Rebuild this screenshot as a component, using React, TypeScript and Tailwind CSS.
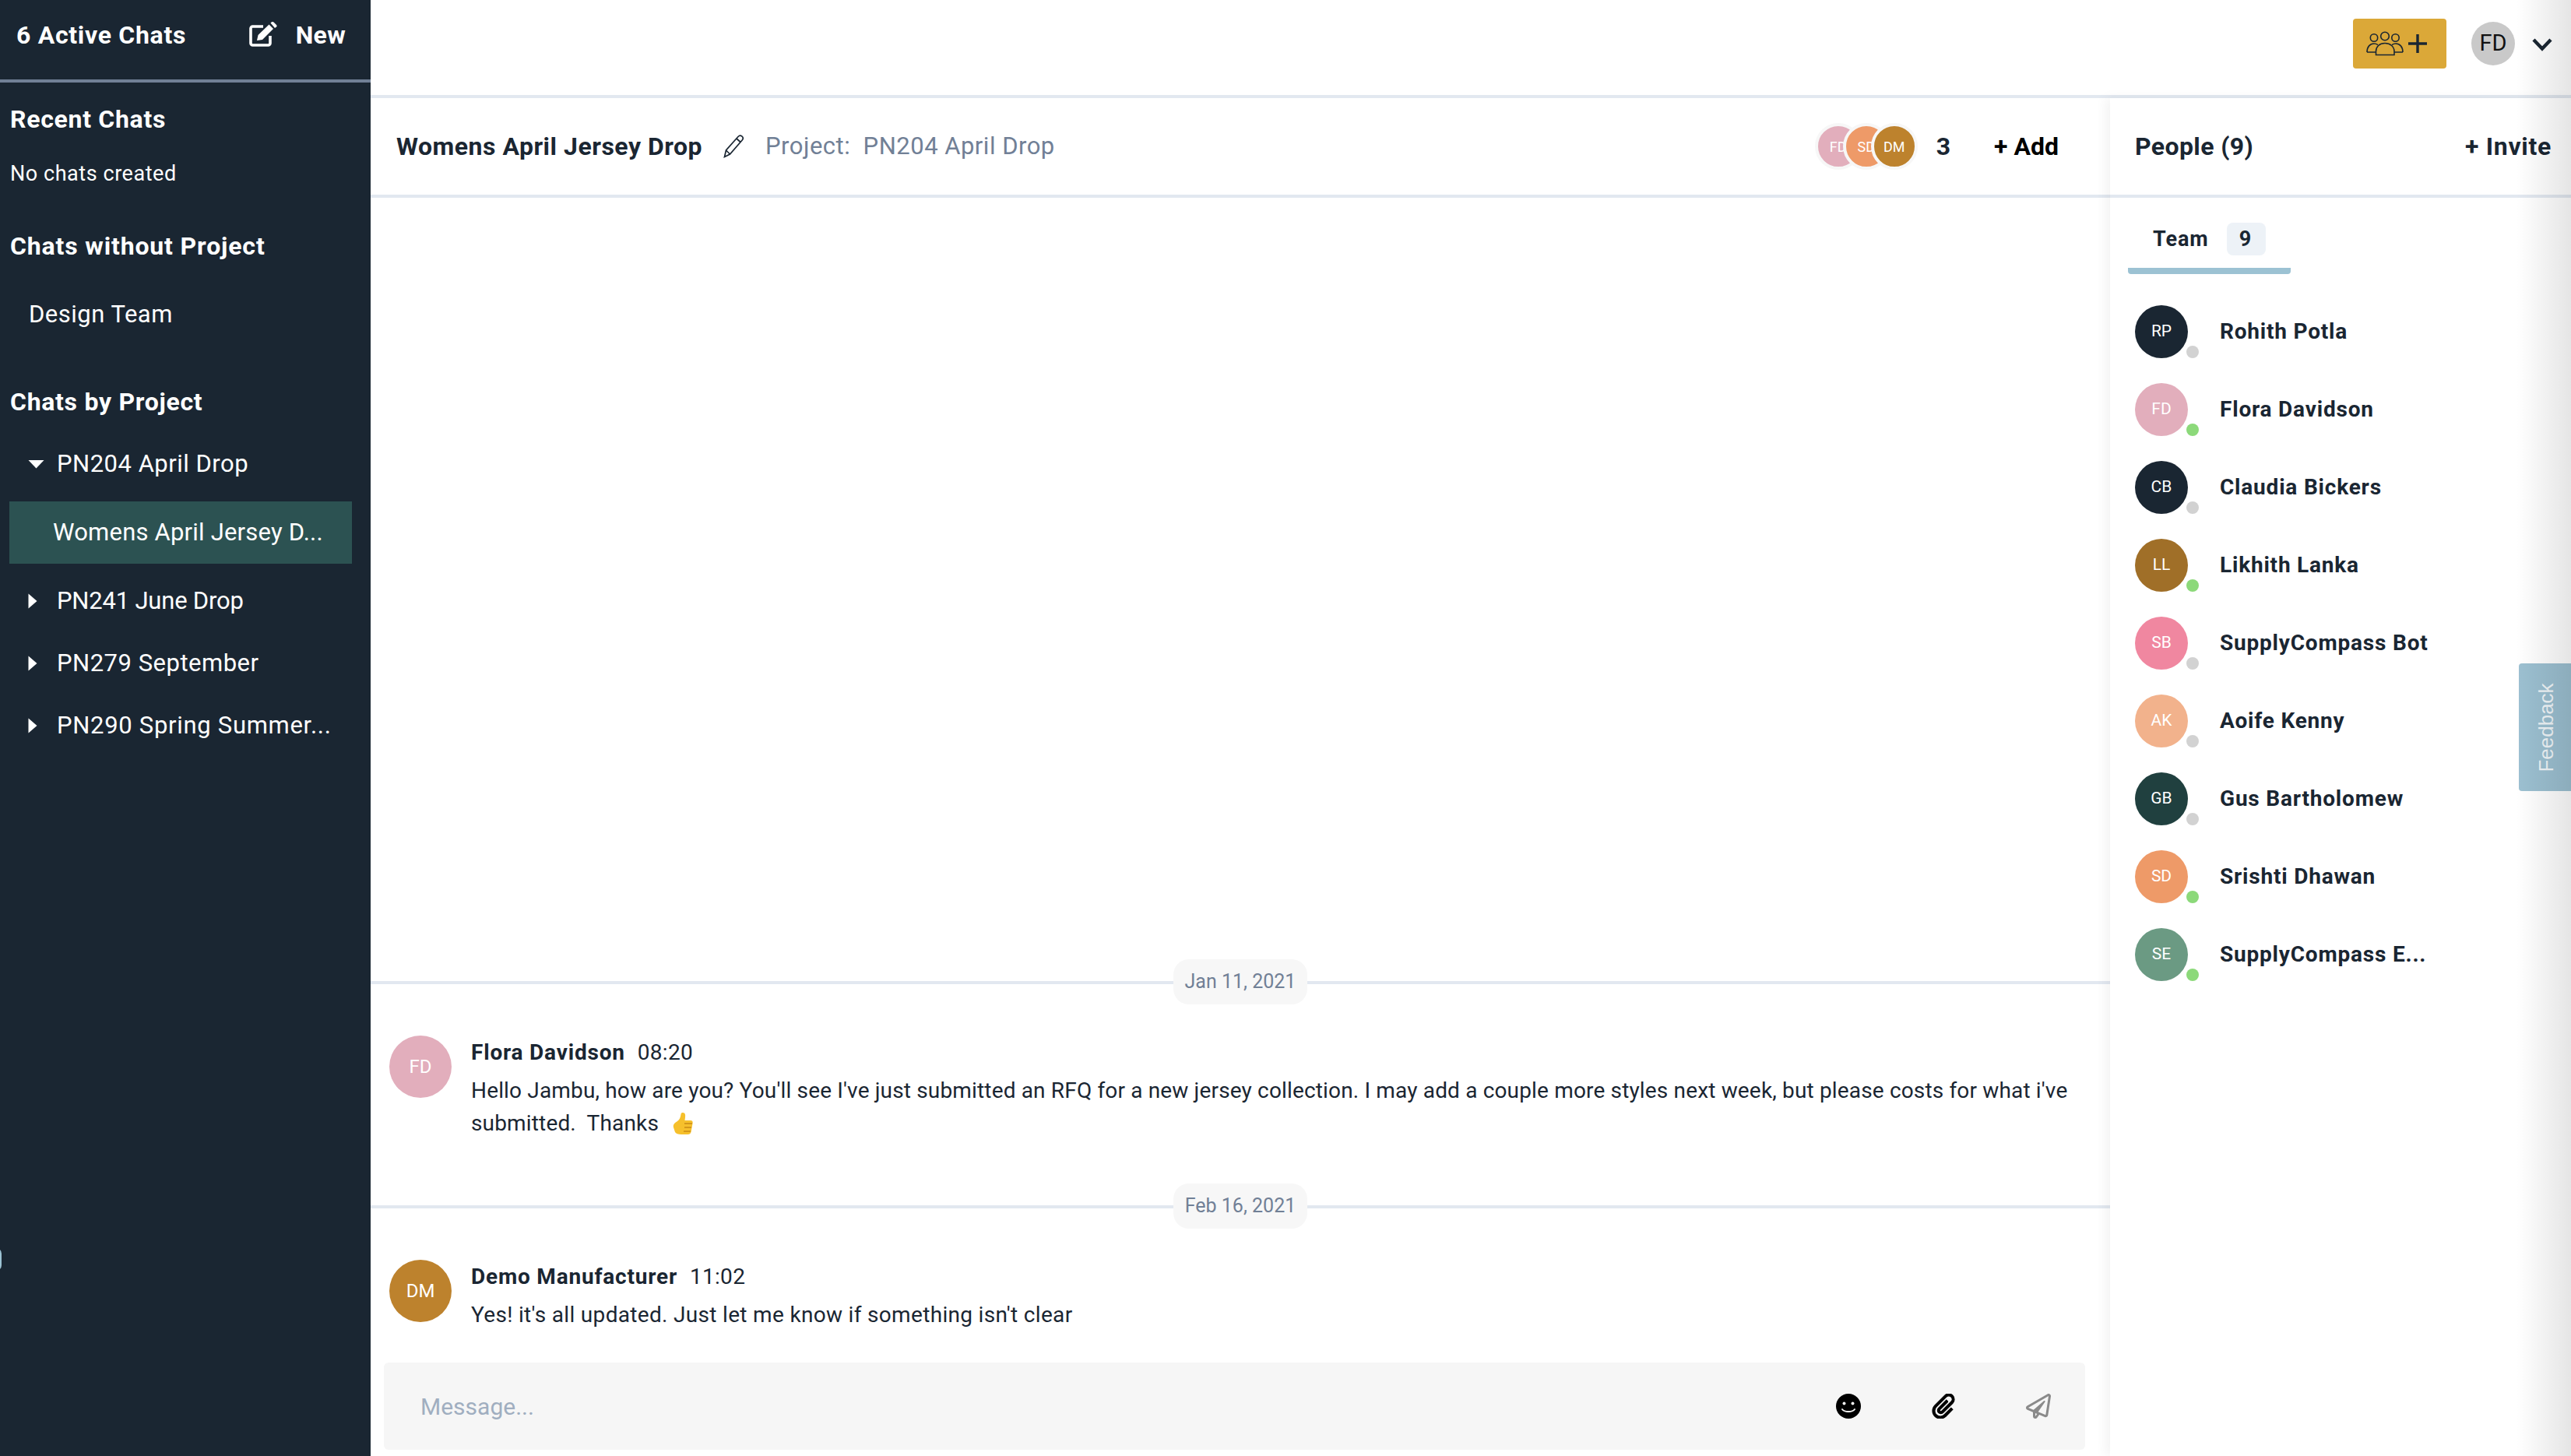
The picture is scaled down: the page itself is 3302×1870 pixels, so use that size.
import React from "react";
import { FaRegPaperPlane } from "react-icons/fa";
import { ImAttachment } from "react-icons/im";

const people = [
  { i: "RP", n: "Rohith Potla", c: "bg-[#1a2632]", on: false },
  { i: "FD", n: "Flora Davidson", c: "bg-[#e2aebc]", on: true },
  { i: "CB", n: "Claudia Bickers", c: "bg-[#1a2632]", on: false },
  { i: "LL", n: "Likhith Lanka", c: "bg-[#a06f28]", on: true },
  { i: "SB", n: "SupplyCompass Bot", c: "bg-[#f087a0]", on: false },
  { i: "AK", n: "Aoife Kenny", c: "bg-[#f2b28c]", on: false },
  { i: "GB", n: "Gus Bartholomew", c: "bg-[#20403f]", on: false },
  { i: "SD", n: "Srishti Dhawan", c: "bg-[#ee9a68]", on: true },
  { i: "SE", n: "SupplyCompass E...", c: "bg-[#6b9a83]", on: true },
];

function CaretRight() {
  return <span className="block w-[37px]"><svg width="12" height="20" viewBox="0 0 12 20"><path d="M0.5 0.5 L11.5 10 L0.5 19.5 Z" fill="#fff" /></svg></span>;
}
function CaretDown() {
  return <span className="block w-[37px]"><svg width="21" height="12" viewBox="0 0 21 12"><path d="M0.5 1 L20.5 1 L10.5 11.5 Z" fill="#fff" /></svg></span>;
}
function ProjectRow({ label, open, track }: { label: string; open?: boolean; track: string }) {
  return (
    <div className={`flex h-[80px] items-center pl-[36px] text-[31px] text-white ${track}`}>
      {open ? <CaretDown /> : <CaretRight />}
      <span>{label}</span>
    </div>
  );
}
function DateDivider({ label }: { label: string }) {
  return (
    <div className="relative flex h-[58px] items-center justify-center">
      <div className="absolute left-0 right-0 top-[28px] h-[4px] bg-[#e2e8f0]" />
      <span className="relative rounded-[20px] bg-[#f7f7f7] px-[15px] text-[25px] leading-[58px] text-[#718096]">{label}</span>
    </div>
  );
}
function ThumbsUp() {
  return (
    <svg width="30" height="30" viewBox="0 0 30 30" className="ml-[16px] inline-block align-[-6px]">
      <path d="M15 1 C18 1 18.5 4 18 7 L17.5 11 L25 11 C27 11 28 12.5 27.6 14.5 L25.5 26 C25 28 23.5 29 21.5 29 L13 29 C9 29 6 28 5 26 L3 20 C2 16 5 14 8 12 C11 10 12 7 12.5 3 C12.8 1.6 13.6 1 15 1 Z" fill="#f6c02c" />
      <path d="M17 15 L27 15 M17 20 L26 20 M16 25 L25 25" stroke="#c98a14" strokeWidth="1.4" />
    </svg>
  );
}
function GroupIcon() {
  return (
    <svg width="48" height="32" viewBox="0 0 48 32" fill="none" stroke="#1a2632" strokeWidth="1.6">
      <circle cx="10" cy="8.5" r="4.7" />
      <circle cx="24" cy="6.5" r="5.3" />
      <circle cx="37.5" cy="8.5" r="4.7" />
      <path d="M1 27 L12 27 M1 27 C1 20 5 16 10 16 C12 16 13.5 16.6 15 17.6" />
      <path d="M47 27 L36 27 M47 27 C47 20 43 16 38 16 C36 16 34.5 16.6 33 17.6" />
      <path d="M12.5 30.5 L36 30.5 L36 26 C36 20 31 15.5 24 15.5 C17 15.5 12.5 20 12.5 26 Z" />
    </svg>
  );
}
function SmileIcon() {
  return (
    <svg width="32" height="32" viewBox="0 0 32 32">
      <circle cx="16" cy="16" r="16" fill="#000" />
      <circle cx="10.5" cy="12.5" r="2" fill="#f6f6f6" />
      <circle cx="21.5" cy="12.5" r="2" fill="#f6f6f6" />
      <path d="M8 20 C11 24 21 24 24 20" stroke="#f6f6f6" strokeWidth="2" fill="none" strokeLinecap="round" />
    </svg>
  );
}
function EditIcon() {
  return (
    <svg width="36" height="32" viewBox="0 0 36 32" className="ml-auto mt-[2px]">
      <path d="M27 18 V27.5 a2.5 2.5 0 0 1 -2.5 2.5 H4.5 a2.5 2.5 0 0 1 -2.5 -2.5 V8.5 a2.5 2.5 0 0 1 2.5 -2.5 H18" fill="none" stroke="#fff" strokeWidth="3.6" />
      <path d="M10 24 L11.5 17 L25.5 3.5 L31 9 L17 23 Z" fill="#fff" />
      <path d="M27.5 1.5 L29 0.3 C30 -0.3 30.8 0 31.5 0.6 L35 4 C35.8 5 35.8 5.8 35 6.6 L33 8 Z" fill="#fff" />
    </svg>
  );
}

export default function App() {
  return (
    <div className="relative flex h-[1870px] w-[3302px] overflow-hidden bg-white font-['Roboto',sans-serif] text-[#1a2632]">
      <aside className="flex w-[476px] shrink-0 flex-col bg-[#1a2632] text-white">
        <div className="flex h-[106px] shrink-0 items-start border-b-[4px] border-[#718096] pl-[21px] pr-[32px] pt-[26px]">
          <span className="text-[32px] font-bold leading-[38px] tracking-[0.7px]">6 Active Chats</span>
          <EditIcon />
          <span className="ml-[24px] text-[32px] font-bold leading-[38px] tracking-[0.3px]">New</span>
        </div>
        <div className="pl-[13px] pt-[28px] text-[32px] font-bold leading-[38px] tracking-[0.7px]">Recent Chats</div>
        <div className="pl-[13px] pt-[35px] text-[27px] leading-[32px] tracking-[0.55px]">No chats created</div>
        <div className="pl-[13px] pt-[58px] text-[32px] font-bold leading-[38px] tracking-[0.85px]">Chats without Project</div>
        <div className="pl-[37px] pt-[50px] text-[31px] leading-[38px] tracking-[0.5px]">Design Team</div>
        <div className="pl-[13px] pt-[74px] text-[32px] font-bold leading-[38px] tracking-[0.7px]">Chats by Project</div>
        <div className="pt-[21px]">
          <ProjectRow label="PN204 April Drop" open track="tracking-[0.5px]" />
          <div className="ml-[12px] mr-[24px] mt-[8px] mb-[8px] flex h-[80px] items-center bg-[#2c5252] pl-[56px] text-[31px] tracking-[0.2px] text-white">Womens April Jersey D...</div>
          <ProjectRow label="PN241 June Drop" track="-tracking-[0.2px]" />
          <ProjectRow label="PN279 September" track="tracking-[0.5px]" />
          <ProjectRow label="PN290 Spring Summer..." track="tracking-[0.7px]" />
        </div>
      </aside>

      <div className="flex min-w-0 flex-1 flex-col">
        <header className="flex h-[126px] shrink-0 items-start border-b-[4px] border-[#e2e8f0] pl-[16px] pr-[24px]">
          <div className="ml-auto mt-[24px] flex h-[64px] w-[120px] items-center gap-[5px] rounded-[4px] bg-[#dba838] pl-[17px]">
            <GroupIcon />
            <svg width="26" height="26" viewBox="0 0 26 26" stroke="#1a2632" strokeWidth="3.4"><path d="M13 1 V25 M1 13 H25" /></svg>
          </div>
          <div className="ml-[32px] mt-[28px] flex h-[56px] w-[56px] items-center justify-center rounded-full bg-[#c9c9c9] text-[29px] text-[#111]">FD</div>
          <svg className="ml-[22px] mt-[49px]" width="26" height="17" viewBox="0 0 26 17" fill="none" stroke="#1a2632" strokeWidth="4.4"><path d="M2 2 L13 13.5 L24 2" /></svg>
        </header>

        <div className="flex min-h-0 flex-1">
          <section className="flex w-[2234px] shrink-0 flex-col">
            <div className="flex h-[128px] shrink-0 items-center border-b-[4px] border-[#e2e8f0] pl-[33px] pr-[66px]">
              <span className="text-[32px] font-bold tracking-[0.5px]">Womens April Jersey Drop</span>
              <svg className="ml-[27px]" width="28" height="30" viewBox="0 0 28 30" fill="none" stroke="#1a2632" strokeWidth="1.7">
                <path d="M1.5 28.5 L3.5 20 L19 2.5 C20.5 1 22.5 1 24 2.2 C25.5 3.5 25.5 5.5 24.2 7 L8.5 25 Z M3.5 20 L8.5 25 M17 5 L22 9.5" />
              </svg>
              <span className="ml-[26px] text-[31px] tracking-[0.5px] text-[#718096]">Project:&nbsp; PN204 April Drop</span>
              <div className="ml-auto flex items-center">
                {[
                  ["FD", "bg-[#e2aebc]", "-ml-0"],
                  ["SD", "bg-[#ee9a68]", "-ml-[24px]"],
                  ["DM", "bg-[#bd822d]", "-ml-[24px]"],
                ].map(([t, c, m]) => (
                  <div key={t} className={`flex h-[60px] w-[60px] items-center justify-center rounded-full border-[4px] border-[#f7f7f7] text-[18px] text-white ${c} ${m}`}>
                    {t}
                  </div>
                ))}
                <span className="ml-[24px] text-[32px] font-bold">3</span>
                <span className="ml-[56px] text-[32px] font-bold text-black">+ Add</span>
              </div>
            </div>

            <div className="flex min-h-0 flex-1 flex-col justify-end">
              <DateDivider label="Jan 11, 2021" />
              <div className="flex pl-[24px] pr-[40px] pt-[40px]">
                <div className="flex h-[80px] w-[80px] shrink-0 items-center justify-center rounded-full bg-[#e2aebc] text-[24px] text-white">FD</div>
                <div className="ml-[25px]">
                  <div className="flex h-[44px] items-center text-[28px] leading-[44px]">
                    <span className="font-bold tracking-[0.8px]">Flora Davidson</span>
                    <span className="ml-[16px] tracking-[0.3px]">08:20</span>
                  </div>
                  <p className="mt-[6px] text-[28px] leading-[42px] tracking-[0.16px]">
                    Hello Jambu, how are you? You'll see I've just submitted an RFQ for a new jersey collection. I may add a couple more styles next week, but please costs for what i've submitted.&nbsp; Thanks<ThumbsUp />
                  </p>
                </div>
              </div>
              <div className="h-[56px] shrink-0" />
              <DateDivider label="Feb 16, 2021" />
              <div className="flex pl-[24px] pr-[40px] pt-[40px]">
                <div className="flex h-[80px] w-[80px] shrink-0 items-center justify-center rounded-full bg-[#bd822d] text-[24px] text-white">DM</div>
                <div className="ml-[25px]">
                  <div className="flex h-[44px] items-center text-[28px] leading-[44px]">
                    <span className="font-bold tracking-[0.8px]">Demo Manufacturer</span>
                    <span className="ml-[16px] tracking-[0.3px]">11:02</span>
                  </div>
                  <p className="mt-[6px] text-[28px] leading-[42px] tracking-[0.32px]">Yes! it's all updated. Just let me know if something isn't clear</p>
                </div>
              </div>
              <div className="ml-[17px] mr-[32px] mb-[8px] mt-[40px] flex h-[112px] shrink-0 items-center rounded-[6px] bg-[#f6f6f6] pl-[47px]">
                <span className="text-[30px] text-[#a0aec0]">Message...</span>
                <div className="ml-auto flex items-center">
                  <SmileIcon />
                  <ImAttachment className="ml-[91px] text-[32px] text-black [stroke-width:0.6]" />
                  <FaRegPaperPlane className="ml-[89px] mr-[44px] text-[32px] text-[#8a8a8a]" />
                </div>
              </div>
            </div>
          </section>

          <section className="relative flex min-w-0 flex-1 flex-col bg-white shadow-[-6px_0_14px_rgba(0,0,0,0.05)]">
            <div className="flex h-[128px] shrink-0 items-center border-b-[4px] border-[#e2e8f0] pl-[32px] pr-[25px]">
              <span className="text-[32px] font-bold tracking-[0.4px]">People (9)</span>
              <span className="ml-auto text-[32px] font-bold tracking-[0.7px]">+ Invite</span>
            </div>
            <div className="ml-[23px] mt-[32px] flex h-[66px] w-[209px] items-start rounded-b-[4px] border-b-[8px] border-[#9cc2d3] pl-[32px]">
              <span className="text-[27px] font-bold leading-[42px] tracking-[0.9px]">Team</span>
              <span className="ml-[23px] flex h-[42px] w-[50px] items-center justify-center rounded-[8px] bg-[#edf2f7] pr-[2px] text-[27px] font-bold">9</span>
            </div>
            <div className="mt-[40px] flex flex-col gap-[32px] pl-[32px]">
              {people.map((p) => (
                <div key={p.n} className="flex h-[68px] items-center">
                  <div className={`relative flex h-[68px] w-[68px] shrink-0 items-center justify-center rounded-full text-[21px] text-white ${p.c}`}>
                    {p.i}
                    <span className={`absolute -right-[14px] bottom-0 h-[16px] w-[16px] rounded-full ${p.on ? "bg-[#8cd97a]" : "bg-[#d2d2d2]"}`} />
                  </div>
                  <span className="ml-[41px] text-[28px] font-bold tracking-[0.8px]">{p.n}</span>
                </div>
              ))}
            </div>
          </section>
        </div>
      </div>

      <div className="absolute right-0 top-[852px] flex h-[164px] w-[67px] items-center justify-center rounded-l-[4px] bg-[#9cc0d1]">
        <span className="ml-[4px] -rotate-90 whitespace-nowrap font-['Liberation_Sans',sans-serif] text-[26px] text-[#f0f5f8]">Feedback</span>
      </div>
      <div className="pointer-events-none absolute bottom-0 right-0 top-0 w-[70px] bg-gradient-to-r from-transparent to-[rgba(0,0,0,0.1)]" />
      <div className="absolute -left-[12px] top-[1603px] h-[29px] w-[14px] rounded-full bg-[#9cc2d3]" />
    </div>
  );
}
